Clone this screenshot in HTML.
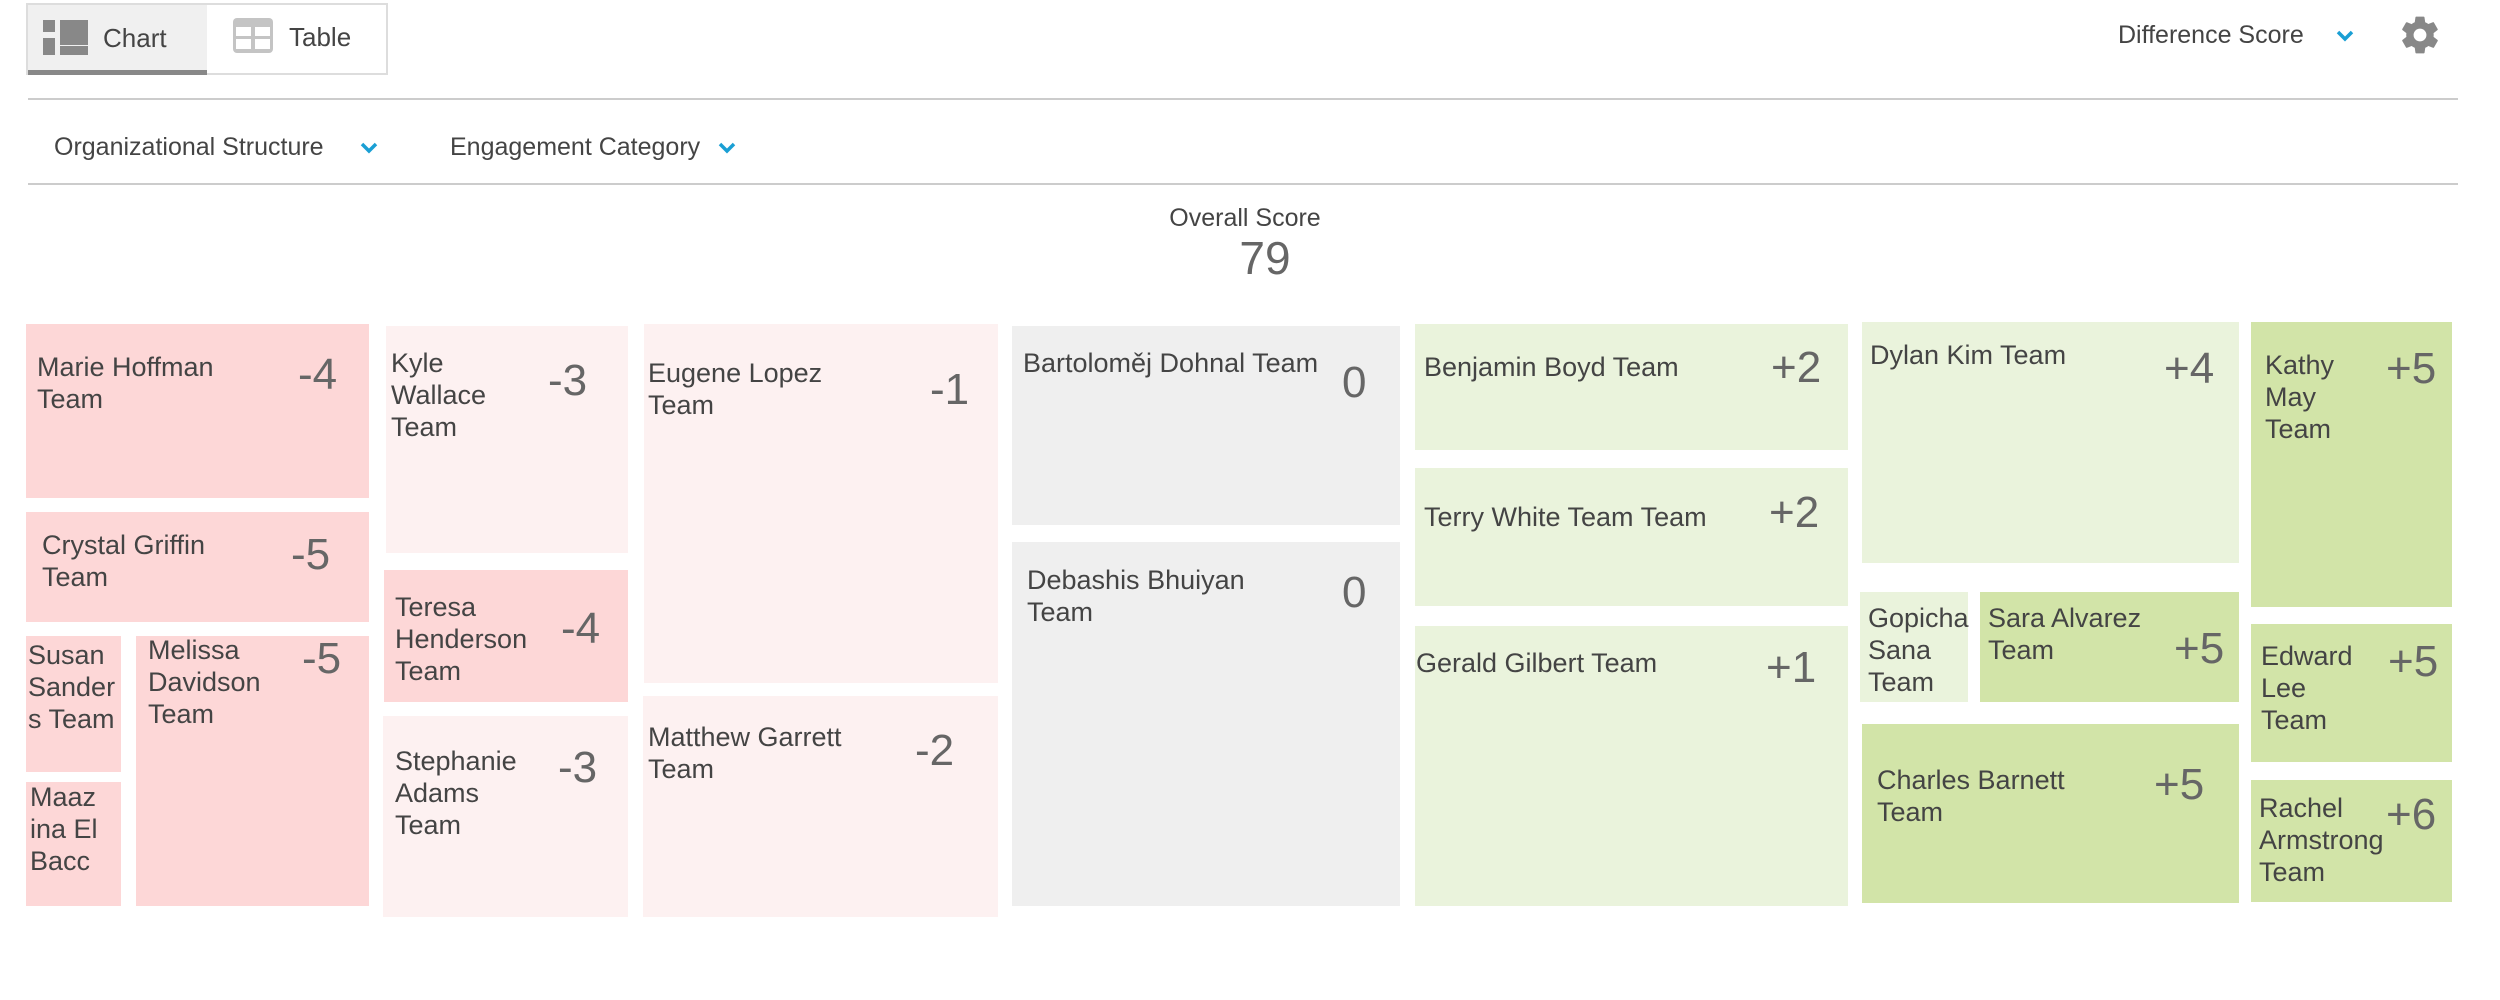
<!DOCTYPE html>
<html><head><meta charset="utf-8"><style>
*{margin:0;padding:0;box-sizing:border-box}
body{width:2500px;height:1000px;background:#fff;position:relative;overflow:hidden;font-family:"Liberation Sans",Arial,sans-serif;color:#444}
.a{position:absolute}
.t{position:absolute;font-size:27px;line-height:32px;white-space:nowrap;color:#444}
.n{position:absolute;font-size:44px;line-height:46px;white-space:nowrap;color:#666}
</style></head><body>
<div class="a" style="left:26px;top:3px;width:362px;height:72px;border:2px solid #ddd;background:#fff"></div>
<div class="a" style="left:28px;top:5px;width:179px;height:68px;background:#f0f0f0"></div>
<div class="a" style="left:28px;top:70px;width:179px;height:5px;background:#888"></div>
<div class="a" style="left:43px;top:20px;width:12px;height:12px;background:#888"></div>
<div class="a" style="left:43px;top:38px;width:12px;height:17px;background:#888"></div>
<div class="a" style="left:60px;top:20px;width:28px;height:25px;background:#888"></div>
<div class="a" style="left:60px;top:46px;width:28px;height:9px;background:#888"></div>
<div class="t" style="left:103px;top:22px;font-size:26px">Chart</div>
<div class="a" style="left:233px;top:18px;width:40px;height:35px;background:#c4c4c4;border-radius:4px"></div>
<div class="a" style="left:236px;top:27px;width:15px;height:9px;background:#fff"></div>
<div class="a" style="left:255px;top:27px;width:15px;height:9px;background:#fff"></div>
<div class="a" style="left:236px;top:39px;width:15px;height:10px;background:#fff"></div>
<div class="a" style="left:255px;top:39px;width:15px;height:10px;background:#fff"></div>
<div class="t" style="left:289px;top:21px;font-size:26px">Table</div>

<div class="t" style="left:2118px;top:19px;font-size:25px">Difference Score</div>
<svg class="a" style="left:2334px;top:28px" width="22" height="16" viewBox="0 0 22 16"><path d="M4 4 L11 11 L18 4" stroke="#1a9fd4" stroke-width="3.5" fill="none"/></svg>
<svg class="a" style="left:2398px;top:13px" width="44" height="44" viewBox="0 0 24 24"><path fill="#888" d="M19.4 13c.04-.33.06-.66.06-1s-.02-.67-.06-1l2.1-1.65c.2-.15.25-.42.12-.64l-2-3.460c-.12-.22-.39-.3-.61-.22l-2.49 1c-.52-.4-1.080-.73-1.690-.98l-.38-2.650A.49.49 0 0 0 14 2h-4c-.25 0-.46.18-.49.42l-.38 2.65c-.61.25-1.17.59-1.69.98l-2.49-1c-.23-.09-.49 0-.61.22l-2 3.46c-.13.22-.07.49.12.64L4.57 11c-.04.33-.07.67-.07 1s.03.67.07 1l-2.11 1.65c-.19.15-.24.42-.12.64l2 3.46c.12.22.39.3.61.22l2.49-1c.52.4 1.08.73 1.69.98l.38 2.65c.03.24.24.42.49.42h4c.25 0 .46-.18.49-.42l.38-2.65c.61-.25 1.17-.59 1.69-.98l2.49 1c.23.09.49 0 .61-.22l2-3.46c.12-.22.07-.49-.12-.64L19.4 13zM12 15.5A3.5 3.5 0 1 1 12 8.5a3.5 3.5 0 0 1 0 7z"/></svg>

<div class="a" style="left:28px;top:98px;width:2430px;height:2px;background:#ccc"></div>
<div class="t" style="left:54px;top:131px;font-size:25px">Organizational Structure</div>
<svg class="a" style="left:358px;top:140px" width="22" height="16" viewBox="0 0 22 16"><path d="M4 4 L11 11 L18 4" stroke="#1a9fd4" stroke-width="3.5" fill="none"/></svg>
<div class="t" style="left:450px;top:131px;font-size:25px">Engagement Category</div>
<svg class="a" style="left:716px;top:140px" width="22" height="16" viewBox="0 0 22 16"><path d="M4 4 L11 11 L18 4" stroke="#1a9fd4" stroke-width="3.5" fill="none"/></svg>
<div class="a" style="left:28px;top:183px;width:2430px;height:2px;background:#ccc"></div>

<div class="t" style="left:1080px;width:330px;text-align:center;top:202px;font-size:25px">Overall Score</div>
<div class="n" style="left:1165px;width:200px;text-align:center;top:235px;font-size:46px">79</div>

<div class="a" style="left:26px;top:324px;width:343px;height:174px;background:#fdd7d7"></div>
<div class="t" style="left:37px;top:351px">Marie Hoffman<br>Team</div><div class="n" style="left:298px;top:352px">-4</div>

<div class="a" style="left:26px;top:512px;width:343px;height:110px;background:#fdd7d7"></div>
<div class="t" style="left:42px;top:529px">Crystal Griffin<br>Team</div><div class="n" style="left:291px;top:532px">-5</div>

<div class="a" style="left:26px;top:636px;width:95px;height:136px;background:#fdd7d7"></div>
<div class="t" style="left:28px;top:639px">Susan<br>Sander<br>s Team</div>
<div class="a" style="left:26px;top:782px;width:95px;height:124px;background:#fdd7d7"></div>
<div class="t" style="left:30px;top:781px">Maaz<br>ina El<br>Bacc</div>
<div class="a" style="left:136px;top:636px;width:233px;height:270px;background:#fdd7d7"></div>
<div class="t" style="left:148px;top:634px">Melissa<br>Davidson<br>Team</div><div class="n" style="left:302px;top:636px">-5</div>

<div class="a" style="left:386px;top:326px;width:242px;height:227px;background:#fdf1f1"></div>
<div class="t" style="left:391px;top:347px">Kyle<br>Wallace<br>Team</div><div class="n" style="left:548px;top:358px">-3</div>
<div class="a" style="left:384px;top:570px;width:244px;height:132px;background:#fdd7d7"></div>
<div class="t" style="left:395px;top:591px">Teresa<br>Henderson<br>Team</div><div class="n" style="left:561px;top:606px">-4</div>
<div class="a" style="left:383px;top:716px;width:245px;height:201px;background:#fdf1f1"></div>
<div class="t" style="left:395px;top:745px">Stephanie<br>Adams<br>Team</div><div class="n" style="left:558px;top:745px">-3</div>

<div class="a" style="left:644px;top:324px;width:354px;height:359px;background:#fdf1f1"></div>
<div class="t" style="left:648px;top:357px">Eugene Lopez<br>Team</div><div class="n" style="left:930px;top:367px">-1</div>
<div class="a" style="left:643px;top:696px;width:355px;height:221px;background:#fdf1f1"></div>
<div class="t" style="left:648px;top:721px">Matthew Garrett<br>Team</div><div class="n" style="left:915px;top:728px">-2</div>

<div class="a" style="left:1012px;top:326px;width:388px;height:199px;background:#efefef"></div>
<div class="t" style="left:1023px;top:347px">Bartoloměj Dohnal Team</div><div class="n" style="left:1342px;top:360px">0</div>
<div class="a" style="left:1012px;top:542px;width:388px;height:364px;background:#efefef"></div>
<div class="t" style="left:1027px;top:564px">Debashis Bhuiyan<br>Team</div><div class="n" style="left:1342px;top:570px">0</div>

<div class="a" style="left:1415px;top:324px;width:433px;height:126px;background:#eaf3dc"></div>
<div class="t" style="left:1424px;top:351px">Benjamin Boyd Team</div><div class="n" style="left:1771px;top:345px">+2</div>
<div class="a" style="left:1415px;top:468px;width:433px;height:138px;background:#eaf3dc"></div>
<div class="t" style="left:1424px;top:501px">Terry White Team Team</div><div class="n" style="left:1769px;top:490px">+2</div>
<div class="a" style="left:1415px;top:626px;width:433px;height:280px;background:#eaf3dc"></div>
<div class="t" style="left:1416px;top:647px">Gerald Gilbert Team</div><div class="n" style="left:1766px;top:645px">+1</div>

<div class="a" style="left:1862px;top:322px;width:377px;height:241px;background:#eaf3dc"></div>
<div class="t" style="left:1870px;top:339px">Dylan Kim Team</div><div class="n" style="left:2164px;top:346px">+4</div>
<div class="a" style="left:1860px;top:592px;width:108px;height:110px;background:#eaf3dc"></div>
<div class="t" style="left:1868px;top:602px">Gopicha<br>Sana<br>Team</div>
<div class="a" style="left:1980px;top:592px;width:259px;height:110px;background:#d2e4a8"></div>
<div class="t" style="left:1988px;top:602px">Sara Alvarez<br>Team</div><div class="n" style="left:2174px;top:626px">+5</div>
<div class="a" style="left:1862px;top:724px;width:377px;height:179px;background:#d2e4a8"></div>
<div class="t" style="left:1877px;top:764px">Charles Barnett<br>Team</div><div class="n" style="left:2154px;top:762px">+5</div>

<div class="a" style="left:2251px;top:322px;width:201px;height:285px;background:#d2e4a8"></div>
<div class="t" style="left:2265px;top:349px">Kathy<br>May<br>Team</div><div class="n" style="left:2386px;top:346px">+5</div>
<div class="a" style="left:2251px;top:624px;width:201px;height:138px;background:#d2e4a8"></div>
<div class="t" style="left:2261px;top:640px">Edward<br>Lee<br>Team</div><div class="n" style="left:2388px;top:639px">+5</div>
<div class="a" style="left:2251px;top:780px;width:201px;height:122px;background:#d2e4a8"></div>
<div class="t" style="left:2259px;top:792px">Rachel<br>Armstrong<br>Team</div><div class="n" style="left:2386px;top:792px">+6</div>
</body></html>
